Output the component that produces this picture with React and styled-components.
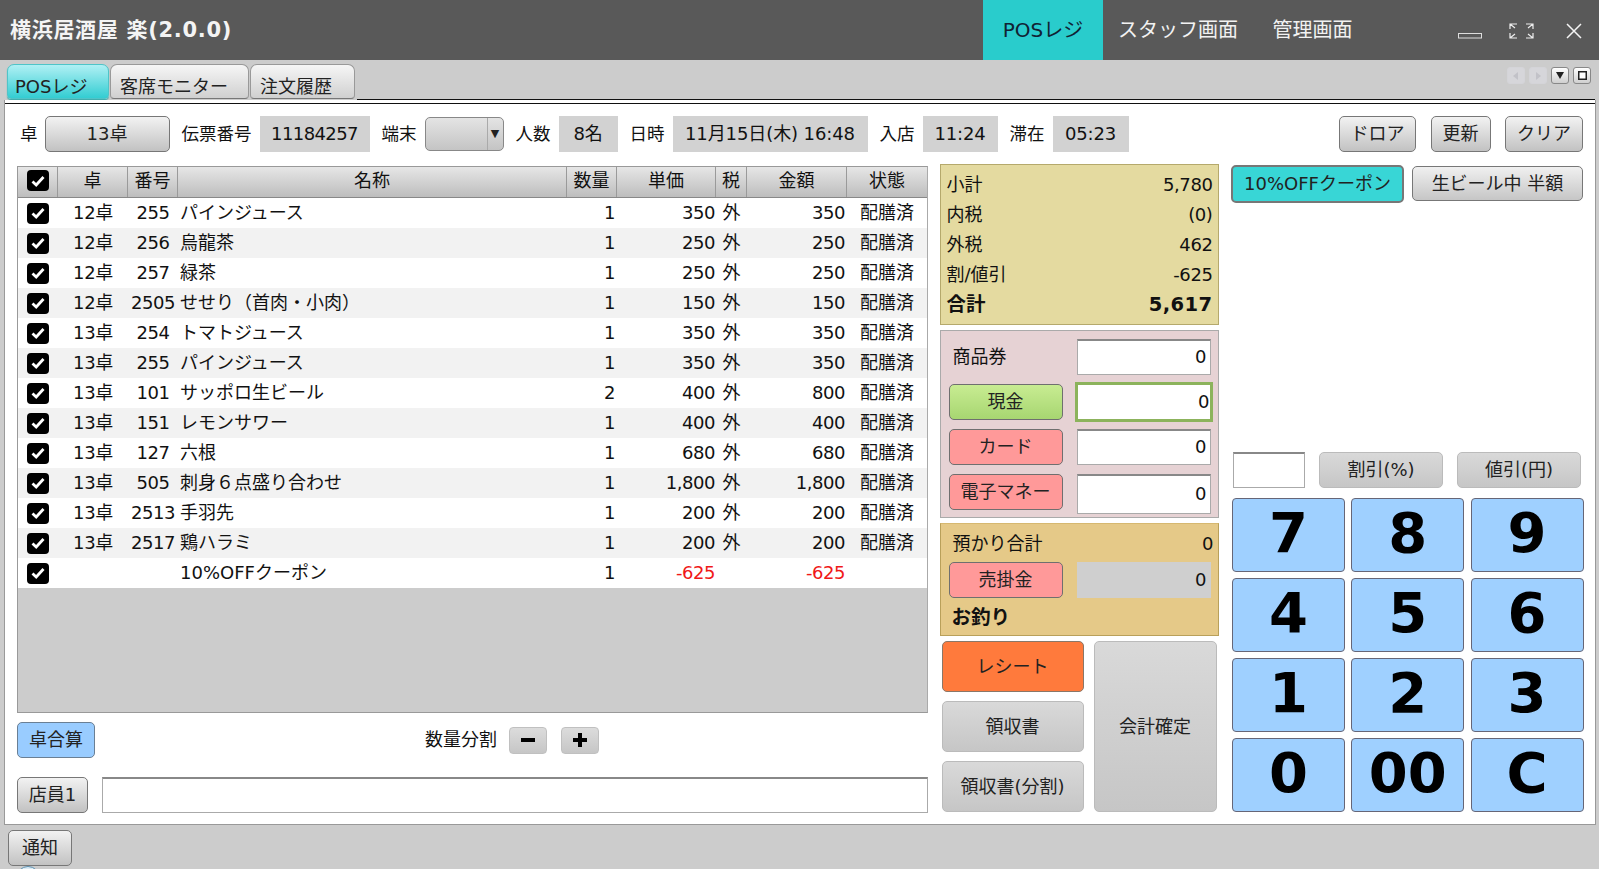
import React from "react";
import styled, { createGlobalStyle, css } from "styled-components";

const Global = createGlobalStyle`
  html, body { margin: 0; padding: 0; width: 1599px; height: 869px; overflow: hidden; background: #ccc; }
  body { font-family: "DejaVu Sans", "Noto Sans CJK JP", sans-serif; font-size: 18px; line-height: 22px; color: #111; }
  * { box-sizing: border-box; }
`;

const Page = styled.div`
  width: 1599px; height: 869px; display: flex; flex-direction: column; overflow: hidden; background: #ccc;
`;
const TitleBar = styled.header`
  height: 60px; background: #595959; display: flex; align-items: center; padding-left: 10px; flex: none;
`;
const Title = styled.h1`
  margin: 0; font-size: 21px; line-height: 26px; font-weight: 700; color: #f4f4f4; letter-spacing: .7px; flex: 1;
`;
const NavItem = styled.div`
  height: 60px; display: flex; align-items: center; justify-content: center; font-size: 20px; color: #f2f2f2;
  width: ${p => p.$w}px;
  ${p => p.$active && css`background: #29cccc; color: #123; `}
`;
const WinControls = styled.div`
  display: flex; align-items: center; margin-left: 86px; gap: 27px; padding-right: 17px; flex: none;
`;
const WinIcon = styled.svg`
  display: block; flex: none; margin-top: 1px;
  ${p => p.$close && css`margin-left: 5px;`}
`;

const TabBar = styled.div`
  height: 40px; display: flex; padding: 4px 4px 0 7px; align-items: stretch; flex: none;
`;
const Tab = styled.div`
  height: 35px; width: ${p => p.$w}px; margin-right: 1px; border: 1px solid #999; border-bottom-color: #777; border-radius: 7px 7px 4px 4px;
  display: flex; align-items: flex-end; padding: 0 0 0 ${p => p.$pad}px; color: #222;
  background: ${p => p.$active ? "linear-gradient(#b0f0f4, #33cdd2)" : "linear-gradient(#f6f6f6, #d0d0d0)"};
  ${p => p.$active && css`border-color: #4fc4c8; box-shadow: 0 1px 1px #3aa;`}
`;
const TabRule = styled.div`
  flex: 1; border-bottom: 1px solid #111; display: flex; justify-content: flex-end; align-items: flex-start; gap: 4px; padding: 3px 4px 0 0; margin-left: 1px;
`;
const ScrollBtn = styled.div`
  width: 18px; height: 17px; border-radius: 3px; display: flex; align-items: center; justify-content: center;
  border: 1px solid ${p => p.$off ? "#d4d4d8" : "#888"};
  background: ${p => p.$off ? "#d6d6da" : "linear-gradient(#fff, #cfcfcf)"};
`;
const Sheet = styled.main`
  margin: 0 3px 0 4px; height: 725px; background: #fff; border: 1px solid #999; border-top: 0; padding-top: 3px; flex: none;
`;
const SheetRule = styled.div`
  height: 1px; background: #111;
`;
const SheetBody = styled.div`
  padding: 12px 12px 0 12px; display: flex; flex-direction: column;
`;
const Toolbar = styled.div`
  height: 36px; display: flex; align-items: center; gap: 12px;
`;
const Field = styled.div`
  display: flex; align-items: center; gap: 8px; white-space: nowrap; font-size: 17.5px;
  ${p => p.$first && css`margin-left: 3px; gap: 7px;`}
`;
const ReadOut = styled.div`
  height: 36px; width: ${p => p.$w}px; background: #d2d2d2; display: flex; align-items: center; justify-content: center; font-size: 18px;
  letter-spacing: ${p => p.$ls ?? -0.2}px;
`;
const btn = css`
  display: flex; align-items: center; justify-content: center; white-space: nowrap; flex: none; color: #222; font-size: 18px;
  border-radius: 5px; border: 1px solid #777;
`;
const GradBtn = styled.div`
  ${btn}
  height: 36px; width: ${p => p.$w}px;
  background: linear-gradient(#f2f2f2, #c2c2c2);
`;
const Select = styled.div`
  height: 34px; width: 79px; border: 1px solid #888; border-radius: 5px; background: linear-gradient(#e4e4e4, #c4c4c4); display: flex; justify-content: flex-end;
`;
const SelectArrow = styled.div`
  width: 16px; border-left: 1px solid #aaa; display: flex; align-items: center; justify-content: center; font-size: 11px; color: #222;
`;
const ToolRight = styled.div`
  margin-left: auto; display: flex; gap: 14.5px;
`;
const Main = styled.div`
  margin-top: 12px; height: 648px; display: grid; grid-template-columns: 911px 280px 352px; column-gap: 11.5px;
`;
const LeftCol = styled.section`
  display: flex; flex-direction: column; padding-top: 2px;
`;
const Table = styled.div`
  height: 547px; background: #ccc; border: 1px solid #999; border-right-color: #aaa;
`;
const cols = "grid-template-columns: 40px 70px 50px 389px 50px 99px 31px 100px 80px;";
const HeadRow = styled.div`
  display: grid; ${cols} height: 31px; background: linear-gradient(#e6e6e6, #bdbdbd); border-bottom: 1px solid #888;
`;
const HeadCell = styled.div`
  display: flex; align-items: center; justify-content: center; border-right: 1px solid #9a9a9a; padding-bottom: 3px;
  &:last-child { border-right: 0; }
`;
const Row = styled.div`
  display: grid; ${cols} height: 30px; background: ${p => p.$alt ? "#f2f2f2" : "#fff"};
`;
const Cell = styled.div`
  display: flex; align-items: center; white-space: nowrap; letter-spacing: ${p => p.$ls ?? -0.45}px;
  justify-content: ${p => p.$align === "r" ? "flex-end" : p.$align === "l" ? "flex-start" : "center"};
  padding-right: ${p => p.$pr ?? 0}px; padding-left: ${p => p.$pl ?? 0}px;
  color: ${p => p.$red ? "#f01818" : "inherit"};
`;
const Check = styled.div`
  width: 22px; height: 21px; border-radius: 4px; background: #000; display: flex; align-items: center; justify-content: center;
`;
const ActionRow = styled.div`
  margin-top: 9px; height: 36px; display: flex; align-items: center;
`;
const BlueBtn = styled.div`
  ${btn}
  width: 78px; height: 36px; background: #99ccff; border-color: #6a7f94;
`;
const SplitGroup = styled.div`
  margin-left: 330px; display: flex; align-items: center;
`;
const SplitLabel = styled.span`
  margin-right: 12px;
`;
const StepBtn = styled.div`
  width: 38px; height: 27px; margin-right: 14px; border-radius: 4px; border: 1px solid #c0c0c0; background: linear-gradient(#dcdcdc, #c6c6c6);
  display: flex; align-items: center; justify-content: center;
`;
const StaffRow = styled.div`
  margin-top: 19px; height: 36px; display: flex; gap: 14px;
`;
const TextInput = styled.div`
  flex: 1; border: 1px solid #aaa; border-top: 2px solid #888; background: #fff;
`;
const MidCol = styled.section`
  display: flex; flex-direction: column; gap: 5px; padding-right: 1px;
`;
const Summary = styled.div`
  height: 161px; background: #e4daa0; border: 1px solid #b5a96c; padding: 5px 5px 0 6px; display: flex; flex-direction: column;
`;
const SumRow = styled.div`
  height: 30px; display: flex; align-items: center; justify-content: space-between;
  ${p => p.$bold && css`font-weight: 700; font-size: 19.5px;`}
`;
const SumValue = styled.span`
  letter-spacing: ${p => p.$bold ? 0.4 : -0.4}px;
`;
const PayPanel = styled.div`
  height: 188px; background: #e6d2d4; border: 1px solid #aaa; padding: 8px 7px 0 8px;
  display: grid; grid-template-columns: 114px 134px; column-gap: 14px; grid-template-rows: 36px 40px 38px 40px; row-gap: 7px;
  align-items: start;
`;
const PayLabel = styled.div`
  height: 36px; display: flex; align-items: center; padding-left: 4px;
`;
const PayBtn = styled.div`
  ${btn}
  width: 114px; height: 36px; border-color: #6f6f6f;
  background: ${p => p.$color === "green" ? "linear-gradient(#c8ec92, #a7d671)" : "#ff9999"};
  ${p => p.$center && css`margin-top: 2px;`}
`;
const Amount = styled.div`
  height: ${p => p.$h ?? 36}px; display: flex; align-items: center; justify-content: flex-end; padding: 0 3px 2px 0;
  border: 1px solid #aaa; border-top: 2px solid #888; background: #fff;
  ${p => p.$focus && css`
    margin: 0 -2px; height: 40px; border: 3px solid #8cb35c; padding: 0;
  `}
  ${p => p.$gray && css`background: #cfcfcf; border: 0; width: 134px; padding: 0 4px 0 0;`}
`;
const ChangePanel = styled.div`
  height: 113px; background: #e5c988; border: 1px solid #b9a05a; border-top-color: #d6b870; padding: 8px 4px 0 8px; display: flex; flex-direction: column;
`;
const DepositRow = styled.div`
  height: 24px; display: flex; justify-content: space-between; align-items: center; padding-left: 4px; margin-bottom: 6px;
`;
const CreditRow = styled.div`
  display: flex; gap: 14px; height: 36px;
`;
const ChangeLabel = styled.div`
  height: 38px; display: flex; align-items: center; padding: 3px 0 0 3px; font-weight: 700; font-size: 19.5px;
`;
const Actions = styled.div`
  padding: 0 2px; height: 171px; display: grid; grid-template-columns: 142px 123px; column-gap: 10px; grid-template-rows: repeat(3, 51px); row-gap: 9px;
`;
const FlatBtn = styled.div`
  ${btn}
  border-color: #bbb; background: linear-gradient(#d9d9d9, #c6c6c6);
  ${p => p.$w && css`width: ${p.$w}px; height: 36px;`}
  ${p => p.$tall && css`grid-column: 2; grid-row: 1 / span 3;`}
`;
const OrangeBtn = styled.div`
  ${btn}
  background: #ff7a3c; border-color: #8a7768;
`;
const RightCol = styled.section`
  display: flex; flex-direction: column; margin-bottom: 1px;
`;
const CouponRow = styled.div`
  height: 39px; display: flex; align-items: center; gap: 8px;
`;
const CouponBtn = styled.div`
  ${btn}
  width: ${p => p.$w}px; height: ${p => p.$active ? 38 : 35}px;
  ${p => p.$active
    ? css`background: #38d6d6; border: 2px solid #777;`
    : css`background: linear-gradient(#f0f0f0, #c6c6c6);`}
`;
const DiscountRow = styled.div`
  margin-top: auto; display: flex; gap: 14px; padding-left: 2px; height: 36px;
`;
const SmallInput = styled.div`
  width: 72px; border: 1px solid #aaa; border-top: 2px solid #888; background: #fff;
`;
const Keypad = styled.div`
  margin: 10px 0 0 1px; display: grid; grid-template-columns: repeat(3, 113px); column-gap: 6.25px; grid-auto-rows: 74px; row-gap: 6px;
`;
const Key = styled.div`
  ${btn}
  color: #000; font-weight: 700; font-size: 56px; line-height: 60px; padding-bottom: 4px; background: #9fd0ff; border-color: #667; border-radius: 4px;
`;
const Footer = styled.footer`
  padding: 5px 0 0 8px; flex: none;
`;
const NotifyBtn = styled(GradBtn)`
  width: 64px;
`;
const Badge = styled.div`
  width: 24px; height: 24px; margin-left: 8px; border-radius: 50%; border: 1px solid #5a8fb0; background: #dcecf6;
`;

const items = [
  ["12卓","255","パインジュース","1","350","350","配膳済"],
  ["12卓","256","烏龍茶","1","250","250","配膳済"],
  ["12卓","257","緑茶","1","250","250","配膳済"],
  ["12卓","2505","せせり（首肉・小肉）","1","150","150","配膳済"],
  ["13卓","254","トマトジュース","1","350","350","配膳済"],
  ["13卓","255","パインジュース","1","350","350","配膳済"],
  ["13卓","101","サッポロ生ビール","2","400","800","配膳済"],
  ["13卓","151","レモンサワー","1","400","400","配膳済"],
  ["13卓","127","六根","1","680","680","配膳済"],
  ["13卓","505","刺身６点盛り合わせ","1","1,800","1,800","配膳済"],
  ["13卓","2513","手羽先","1","200","200","配膳済"],
  ["13卓","2517","鶏ハラミ","1","200","200","配膳済"],
  ["","","10%OFFクーポン","1","-625","-625",""],
];

const CheckBox = () => (
  <Check>
    <svg width="14" height="12" viewBox="0 0 14 12"><path d="M1.5 6.5 L5.2 10 L12.5 2" fill="none" stroke="#fff" strokeWidth="2.8" /></svg>
  </Check>
);

export default function App() {
  return (
    <Page>
      <Global />
      <TitleBar>
        <Title>横浜居酒屋 楽(2.0.0)</Title>
        <NavItem $w={120} $active>POSレジ</NavItem>
        <NavItem $w={150}>スタッフ画面</NavItem>
        <NavItem $w={119}>管理画面</NavItem>
        <WinControls>
          <WinIcon width="24" height="16" viewBox="0 0 24 16"><rect x=".5" y="10.5" width="23" height="4.5" fill="none" stroke="#ddd" /></WinIcon>
          <WinIcon width="25" height="16" viewBox="0 0 25 16"><path d="M1 6V1h7M1 1l5 4M24 6V1h-7M24 1l-5 4M1 10v5h7M1 15l5-4M24 10v5h-7M24 15l-5-4" fill="none" stroke="#eee" strokeWidth="1.2" /></WinIcon>
          <WinIcon $close width="16" height="16" viewBox="0 0 16 16"><path d="M1 1l14 14M15 1L1 15" fill="none" stroke="#f4f4f4" strokeWidth="1.5" /></WinIcon>
        </WinControls>
      </TitleBar>
      <TabBar>
        <Tab $w={102} $pad={7} $active>POSレジ</Tab>
        <Tab $w={139} $pad={9}>客席モニター</Tab>
        <Tab $w={105} $pad={9}>注文履歴</Tab>
        <TabRule>
          <ScrollBtn $off><svg width="6" height="8"><path d="M5 0v8L0 4z" fill="#c2c2c8" /></svg></ScrollBtn>
          <ScrollBtn $off><svg width="6" height="8"><path d="M1 0v8l5-4z" fill="#c2c2c8" /></svg></ScrollBtn>
          <ScrollBtn><svg width="8" height="7"><path d="M0 0h8L4 7z" fill="#222" /></svg></ScrollBtn>
          <ScrollBtn><svg width="9" height="9"><rect x=".75" y=".75" width="7.5" height="7.5" fill="#fff" stroke="#222" strokeWidth="1.5" /></svg></ScrollBtn>
        </TabRule>
      </TabBar>
      <Sheet>
        <SheetRule />
        <SheetBody>
          <Toolbar>
            <Field $first>卓<GradBtn $w={125}>13卓</GradBtn></Field>
            <Field>伝票番号<ReadOut $w={110} $ls={-0.6}>11184257</ReadOut></Field>
            <Field>端末<Select><SelectArrow>▼</SelectArrow></Select></Field>
            <Field>人数<ReadOut $w={59}>8名</ReadOut></Field>
            <Field>日時<ReadOut $w={195} $ls={-0.1}>11月15日(木) 16:48</ReadOut></Field>
            <Field>入店<ReadOut $w={75}>11:24</ReadOut></Field>
            <Field>滞在<ReadOut $w={76}>05:23</ReadOut></Field>
            <ToolRight>
              <GradBtn $w={77}>ドロア</GradBtn>
              <GradBtn $w={60}>更新</GradBtn>
              <GradBtn $w={78}>クリア</GradBtn>
            </ToolRight>
          </Toolbar>
          <Main>
            <LeftCol>
              <Table>
                <HeadRow>
                  <HeadCell><CheckBox /></HeadCell>
                  {["卓","番号","名称","数量","単価","税","金額","状態"].map(t => <HeadCell key={t}>{t}</HeadCell>)}
                </HeadRow>
                {items.map((r, i) => {
                  const neg = r[4].startsWith("-");
                  return (
                    <Row key={i} $alt={i % 2 === 1}>
                      <Cell><CheckBox /></Cell>
                      <Cell $ls={-0.3}>{r[0]}</Cell>
                      <Cell>{r[1]}</Cell>
                      <Cell $align="l" $pl={2} $ls={0}>{r[2]}</Cell>
                      <Cell $align="r" $pr={2}>{r[3]}</Cell>
                      <Cell $align="r" $pr={1} $red={neg}>{r[4]}</Cell>
                      <Cell $ls={0}>{neg ? "" : "外"}</Cell>
                      <Cell $align="r" $pr={2} $red={neg}>{r[5]}</Cell>
                      <Cell $ls={0}>{r[6]}</Cell>
                    </Row>
                  );
                })}
              </Table>
              <ActionRow>
                <BlueBtn>卓合算</BlueBtn>
                <SplitGroup>
                  <SplitLabel>数量分割</SplitLabel>
                  <StepBtn><svg width="14" height="14"><rect x="0" y="5" width="14" height="4" fill="#000" /></svg></StepBtn>
                  <StepBtn><svg width="14" height="14"><path d="M5 0h4v5h5v4H9v5H5V9H0V5h5z" fill="#000" /></svg></StepBtn>
                </SplitGroup>
              </ActionRow>
              <StaffRow>
                <GradBtn $w={71}>店員1</GradBtn>
                <TextInput />
              </StaffRow>
            </LeftCol>
            <MidCol>
              <Summary>
                <SumRow><span>小計</span><SumValue>5,780</SumValue></SumRow>
                <SumRow><span>内税</span><SumValue>(0)</SumValue></SumRow>
                <SumRow><span>外税</span><SumValue>462</SumValue></SumRow>
                <SumRow><span>割/値引</span><SumValue>-625</SumValue></SumRow>
                <SumRow $bold><span>合計</span><SumValue $bold>5,617</SumValue></SumRow>
              </Summary>
              <PayPanel>
                <PayLabel>商品券</PayLabel>
                <Amount>0</Amount>
                <PayBtn $color="green" $center>現金</PayBtn>
                <Amount $focus>0</Amount>
                <PayBtn>カード</PayBtn>
                <Amount>0</Amount>
                <PayBtn>電子マネー</PayBtn>
                <Amount $h={40}>0</Amount>
              </PayPanel>
              <ChangePanel>
                <DepositRow><span>預かり合計</span><span>0</span></DepositRow>
                <CreditRow>
                  <PayBtn>売掛金</PayBtn>
                  <Amount $gray>0</Amount>
                </CreditRow>
                <ChangeLabel>お釣り</ChangeLabel>
              </ChangePanel>
              <Actions>
                <OrangeBtn>レシート</OrangeBtn>
                <FlatBtn $tall>会計確定</FlatBtn>
                <FlatBtn>領収書</FlatBtn>
                <FlatBtn>領収書(分割)</FlatBtn>
              </Actions>
            </MidCol>
            <RightCol>
              <CouponRow>
                <CouponBtn $w={173} $active>10%OFFクーポン</CouponBtn>
                <CouponBtn $w={171}>生ビール中 半額</CouponBtn>
              </CouponRow>
              <DiscountRow>
                <SmallInput />
                <FlatBtn $w={124}>割引(%)</FlatBtn>
                <FlatBtn $w={124}>値引(円)</FlatBtn>
              </DiscountRow>
              <Keypad>
                {["7","8","9","4","5","6","1","2","3","0","00","C"].map(k => <Key key={k}>{k}</Key>)}
              </Keypad>
            </RightCol>
          </Main>
        </SheetBody>
      </Sheet>
      <Footer>
        <NotifyBtn>通知</NotifyBtn>
        <Badge />
      </Footer>
    </Page>
  );
}
